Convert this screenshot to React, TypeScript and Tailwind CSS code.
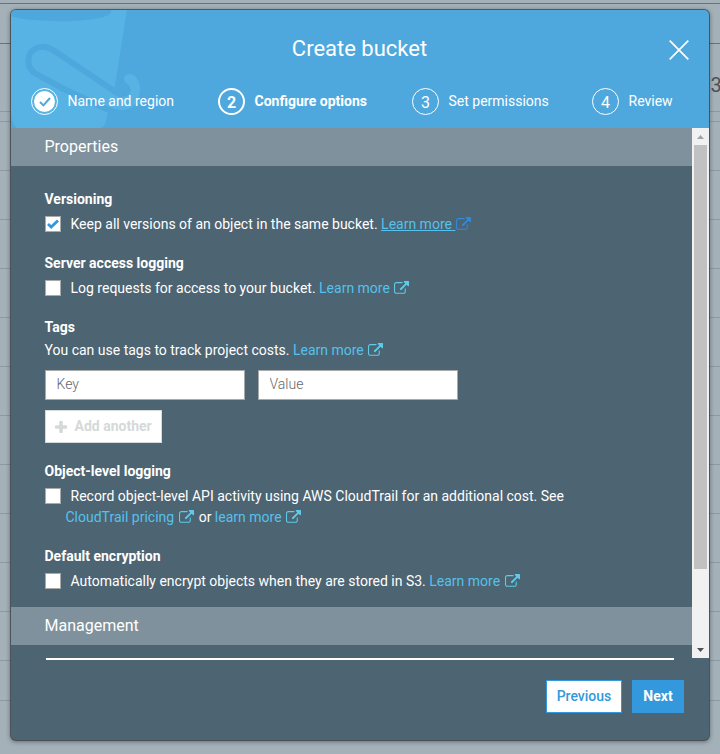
import type { ReactNode } from "react";

const rowHeights = ["h-1", "h-10", "h-[68px]", "h-2.5", ...Array(11).fill("h-[49px]"), "h-10"];

function ExternalIcon({ className = "text-[#5fcbe8]" }: { className?: string }) {
  return (
    <svg viewBox="0 0 1792 1600" width="15" height="13.4" className={`inline-block align-[-1px] ${className}`} fill="currentColor">
      <path d="M1408 928v320q0 119-84.5 203.5t-203.5 84.5h-832q-119 0-203.5-84.5t-84.5-203.5v-832q0-119 84.5-203.5t203.5-84.5h704q14 0 23 9t9 23v64q0 14-9 23t-23 9h-704q-66 0-113 47t-47 113v832q0 66 47 113t113 47h832q66 0 113-47t47-113v-320q0-14 9-23t23-9h64q14 0 23 9t9 23zm384-864v512q0 26-19 45t-45 19-45-19l-176-176-652 652q-10 10-23 10t-23-10l-114-114q-10-10-10-23t10-23l652-652-176-176q-19-19-19-45t19-45 45-19h512q26 0 45 19t19 45z" />
    </svg>
  );
}

function Link({ children }: { children: ReactNode }) {
  return (
    <>
      <a className="mr-[4.5px] text-[#55c1ec]">{children}</a>
      <ExternalIcon />
    </>
  );
}

function Check({ checked = false }: { checked?: boolean }) {
  return (
    <span className="mr-[9.5px] flex size-4 shrink-0 items-center justify-center border border-[#a9a9a9] bg-white">
      {checked && (
        <svg width="12" height="10" viewBox="0 0 12 10" fill="none" stroke="#3399dc" strokeWidth="2.8">
          <path d="M1 5l3.2 3L11 1.4" />
        </svg>
      )}
    </span>
  );
}

function Heading({ className = "", children }: { className?: string; children: ReactNode }) {
  return <h3 className={`-ml-[0.5px] h-5 font-bold leading-5 ${className}`}>{children}</h3>;
}

function Option({ checked, children }: { checked?: boolean; children: ReactNode }) {
  return (
    <div className="mt-[5px] flex h-5 items-center whitespace-nowrap leading-5">
      <Check checked={checked} />
      <span>{children}</span>
    </div>
  );
}

function Step({ n, label, width, state }: { n: string; label: string; width: string; state?: "done" | "current" }) {
  return (
    <div className={`flex items-center whitespace-nowrap ${width}`}>
      <span
        className={`mr-[9.5px] flex size-[27px] shrink-0 items-center justify-center rounded-full border-white text-base leading-none ${
          state === "current" ? "border-2 font-bold" : "border font-normal"
        }`}
      >
        {state === "done" ? (
          <span className="flex size-[21px] items-center justify-center rounded-full bg-white">
            <svg width="12" height="10" viewBox="0 0 12 10" fill="none" stroke="#4ea8dd" strokeWidth="2">
              <path d="M1 5l3.400 3.400L11 1" />
            </svg>
          </span>
        ) : (
          <span className="pt-0.5">{n}</span>
        )}
      </span>
      <span className={`pb-px ${state === "current" ? "font-bold" : ""}`}>{label}</span>
    </div>
  );
}

function Bucket() {
  return (
    <svg className="absolute left-0 top-0" width="140" height="118" viewBox="11 10 140 118" fill="none">
      <path d="M11 10H127L114.700 87L108 113L105.500 122Q104 128 99 128H17Q12 125 11 113Z" fill="#57b3e3" />
      <path d="M11 10H111V12C111 17 90 21.200 62 21.200C36 21.200 18 19 11 16Z" fill="#4ea8dd" />
      <path d="M118 93.500L53 50C43 43 28.500 48 28.300 61C28.300 67 31 71 37 74.500L63 88.500L110 110.500" stroke="#4ea8dd" strokeWidth="6" />
      <path d="M100 86.500L112 93.500C118 98 124 98 128 95C132 91 132 87 127 84C122 80 124 74 130 74C136 74 140 82 140 89C140 104 130 111 121 110C116 109.500 112 108 108 106.500L96 101Z" fill="#57b3e3" />
      <path d="M98 80.500L112 89.500C117 93.500 121 95 124 94" stroke="#4ea8dd" strokeWidth="5" />
    </svg>
  );
}

export default function App() {
  return (
    <div className="relative h-[754px] w-[720px] overflow-hidden bg-[#a4b1b9] font-['Roboto',sans-serif] text-sm text-white">
      <div className="flex flex-col">
        {rowHeights.map((h, i) => (
          <div key={i} className={`${h} border-b ${i < 2 ? "border-[#66737b]" : "border-[#8c99a1]"}`} />
        ))}
      </div>
      <span className="absolute left-[710.5px] top-[73px] text-xl leading-6 text-[#4b5258]">3</span>

      <div className="absolute left-[11px] top-[10px] flex h-[730px] w-[698px] flex-col overflow-hidden rounded-[5px] bg-[#4d6472] shadow-[0_0_0_1px_rgba(50,55,60,0.65),0_1px_4px_1px_rgba(40,45,50,0.5)]">
        <header className="relative h-[118px] shrink-0 bg-[#4ea8dd]">
          <Bucket />
          <div className="relative flex h-[77px] items-center justify-center">
            <h1 className="-ml-px text-[22px] leading-none">Create bucket</h1>
            <svg className="absolute left-[658px] top-[30px]" width="20" height="20" viewBox="0 0 20 20" stroke="white" strokeWidth="1.7">
              <path d="M.7 .7L19.300 19.300M19.300 .7L.7 19.300" />
            </svg>
          </div>
          <div className="relative flex h-[28px] pl-5 pt-px">
            <Step n="1" label="Name and region" width="w-[187px]" state="done" />
            <Step n="2" label="Configure options" width="w-[194px]" state="current" />
            <Step n="3" label="Set permissions" width="w-[180px]" />
            <Step n="4" label="Review" width="w-[90px]" />
          </div>
        </header>

        <div className="flex h-[530px] shrink-0">
          <main className="w-[681px]">
            <h2 className="flex h-[38px] items-center bg-[#7f919c] py-0.5 pl-[33.5px] text-base">Properties</h2>
            <section className="h-[441px] pl-[34px] pt-[23px]">
              <Heading>Versioning</Heading>
              <Option checked>
                Keep all versions of an object in the same bucket.{" "}
                <a className="mr-px text-[#55c1ec] underline">Learn more{"\u00a0"}</a>
                <ExternalIcon className="text-[#3488d8]" />
              </Option>
              <Heading className="mt-[19px]">Server access logging</Heading>
              <Option>
                Log requests for access to your bucket. <Link>Learn more</Link>
              </Option>
              <Heading className="mt-[19px]">Tags</Heading>
              <p className="-ml-[0.5px] mt-[3px] h-5 leading-5">
                You can use tags to track project costs. <Link>Learn more</Link>
              </p>
              <div className="mt-2.5 flex gap-[13px]">
                <input placeholder="Key" className="h-[30px] w-[200px] border border-[#a9a9a9] bg-white px-[10.5px] pb-0.5 font-light placeholder:text-[#666]" />
                <input placeholder="Value" className="h-[30px] w-[200px] border border-[#a9a9a9] bg-white px-[10.5px] pb-0.5 font-light placeholder:text-[#666]" />
              </div>
              <button className="mt-2.5 flex h-[33px] w-[117px] items-center border border-[#d5dbdb] bg-white pl-[9px] font-bold text-[#d5d9d9]">
                <svg width="12" height="12" viewBox="0 0 12 12" fill="currentColor" className="mr-[7.5px]">
                  <path d="M5.200 0h1.600q1 0 1 1v3.200h3.200q1 0 1 1v1.600q0 1-1 1H7.800v3.200q0 1-1 1H5.200q-1 0-1-1V7.800H1q-1 0-1-1V5.200q0-1 1-1h3.200V1q0-1 1-1z" />
                </svg>
                <span className="pb-0.5">Add another</span>
              </button>
              <Heading className="mt-[18px]">Object-level logging</Heading>
              <Option>Record object-level API activity using AWS CloudTrail for an additional cost. See</Option>
              <p className="mt-px h-5 pl-[20.5px] leading-5">
                <Link>CloudTrail pricing</Link>
                <span className="ml-[1.5px]"> or </span>
                <Link>learn more</Link>
              </p>
              <Heading className="mt-[19px]">Default encryption</Heading>
              <Option>
                Automatically encrypt objects when they are stored in S3. <Link>Learn more</Link>
              </Option>
            </section>
            <h2 className="flex h-[38px] items-center bg-[#7f919c] pl-[33.5px] text-base">Management</h2>
          </main>
          <div className="flex w-[17px] flex-col items-center justify-between bg-[#f1f1f1]">
            <div className="flex flex-col items-center">
              <svg width="17" height="17" viewBox="0 0 17 17" fill="#a3a3a3"><path d="M5 11h7L8.500 7z" /></svg>
              <div className="h-[424px] w-[13px] bg-[#c1c1c1]" />
            </div>
            <svg width="17" height="17" viewBox="0 0 17 17" fill="#505050"><path d="M5 7h7L8.500 11z" /></svg>
          </div>
        </div>

        <footer>
          <div className="ml-[35px] h-0.5 w-[628px] bg-white" />
          <div className="mt-5 flex justify-end gap-2.5 pr-[25px]">
            <button className="h-[33px] w-[76px] border border-[#3399dc] bg-white pb-0.5 font-medium text-[#3399dc]">Previous</button>
            <button className="h-[33px] w-[52px] bg-[#3399dc] pb-px font-bold">Next</button>
          </div>
        </footer>
      </div>
    </div>
  );
}
